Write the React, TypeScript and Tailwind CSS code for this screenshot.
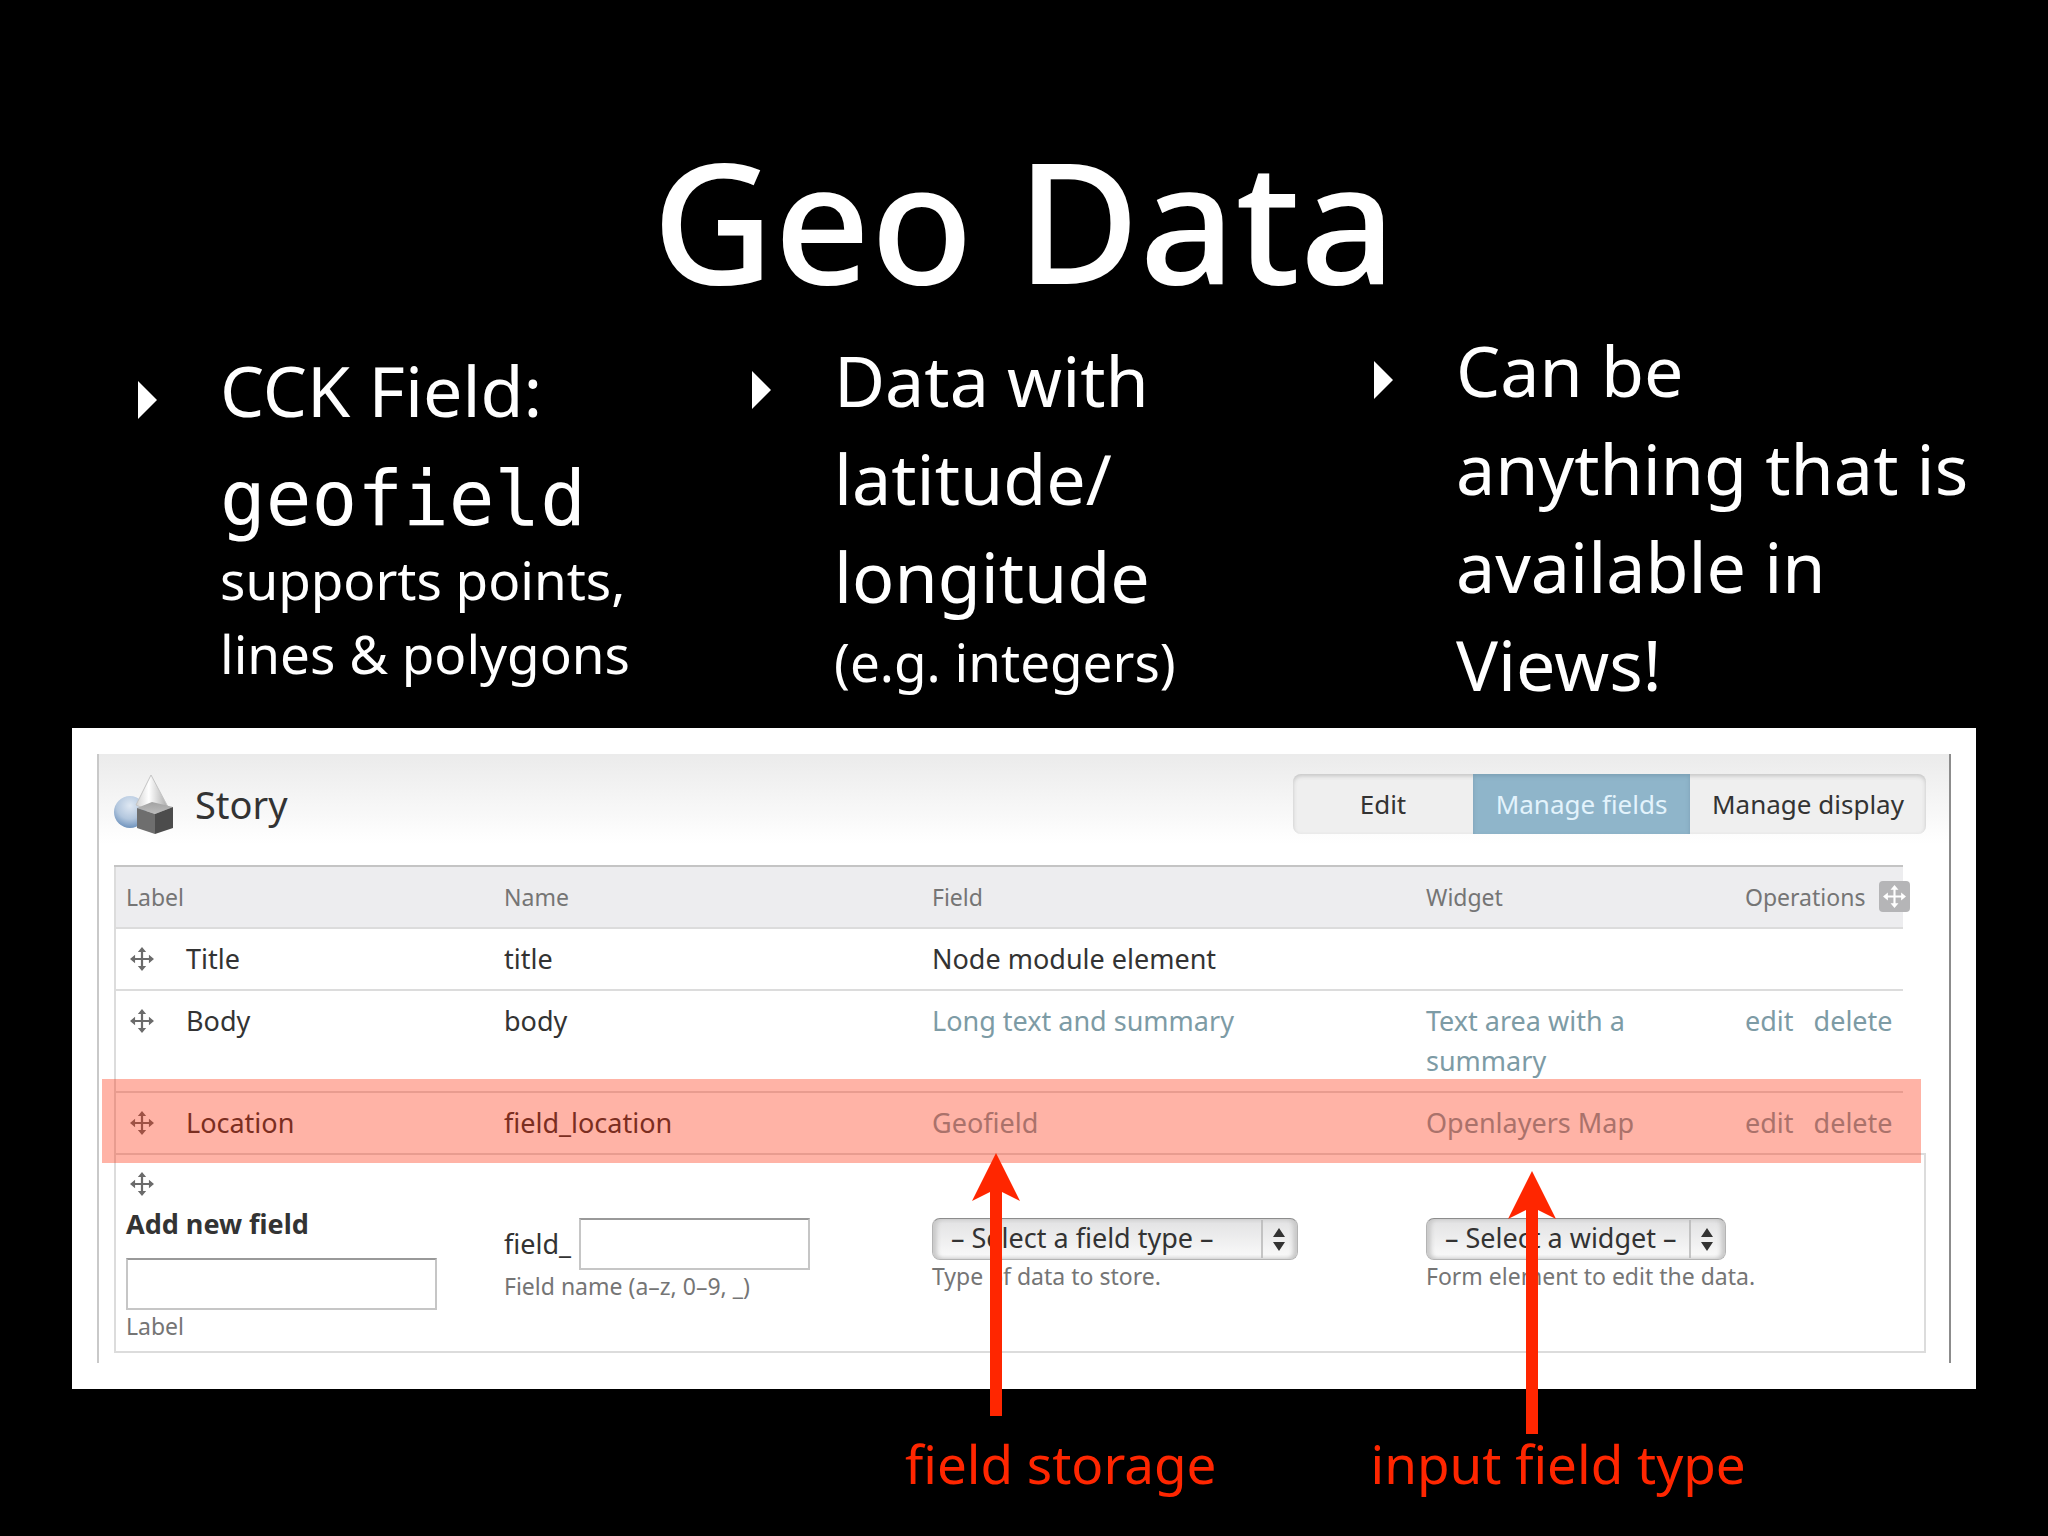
import type { ReactNode } from 'react';

const MoveIcon = ({ className }: { className: string }) => (
  <svg viewBox="0 0 26 26" className={className} aria-hidden="true">
    <path d="M13 4v18M4 13h18" stroke="currentColor" strokeWidth="2.4" fill="none" />
    <path
      d="M13 0l4.500 5.500h-9zM13 26l4.500-5.500h-9zM0 13l5.500-4.500v9zM26 13l-5.500-4.500v9z"
      fill="currentColor"
    />
  </svg>
);

const ShapesIcon = () => (
  <svg viewBox="0 0 60 60" className="size-[60px]" aria-hidden="true">
    <defs>
      <radialGradient id="sphere" cx="0.5" cy="0.3" r="0.7">
        <stop offset="0" stopColor="#dfe8f3" />
        <stop offset="0.6" stopColor="#b3c7de" />
        <stop offset="1" stopColor="#6f93bd" />
      </radialGradient>
      <linearGradient id="cone">
        <stop offset="0" stopColor="#d2d2d2" />
        <stop offset="0.4" stopColor="#ffffff" />
        <stop offset="1" stopColor="#a9a9a9" />
      </linearGradient>
      <linearGradient id="cubeTop" x1="0" y1="0" x2="0" y2="1">
        <stop offset="0" stopColor="#a2a2a2" />
        <stop offset="1" stopColor="#bdbdbd" />
      </linearGradient>
    </defs>
    <circle cx="16" cy="38" r="16" fill="url(#sphere)" />
    <path d="M37 1L22 31q14 8 32 2z" fill="url(#cone)" stroke="#c4c4c4" strokeWidth="1" />
    <path d="M23 34l15-6 21 5-18 7z" fill="url(#cubeTop)" />
    <path d="M23 34l18 6v20l-18-6z" fill="#6e6e6e" />
    <path d="M41 40l18-7v21l-18 6z" fill="#4c4c4c" />
  </svg>
);

const Arrow = ({ className }: { className: string }) => (
  <svg viewBox="0 0 48 263" className={className} aria-hidden="true">
    <path d="M24 0l24 48-18-9v224H18V39L0 48z" fill="#ff2600" />
  </svg>
);

function Bullet({ className, children }: { className: string; children: ReactNode }) {
  return (
    <li className={`flex gap-[63px] ${className}`}>
      <svg viewBox="0 0 19 38" className="mt-[40px] h-[38px] w-[19px] shrink-0" aria-hidden="true">
        <path d="M0 0l19 19L0 38z" fill="#fff" />
      </svg>
      <p className="text-[70px] leading-[98px] whitespace-nowrap">{children}</p>
    </li>
  );
}

function Select({ id, label, className }: { id: string; label: string; className: string }) {
  return (
    <div className={`relative ${className}`}>
      <select
        id={id}
        className="block h-[42px] w-full appearance-none rounded-lg border border-[#b4b4b4] border-t-[#8c8c8c] bg-linear-to-b from-[#e2e2e3] to-[#fafafa] pb-[2px] pl-[18px] text-[27px] leading-[38px] text-[#333] shadow-[inset_4px_0_4px_#c9c9c9,inset_-4px_0_4px_#c9c9c9]"
      >
        <option>{label}</option>
      </select>
      <svg
        viewBox="0 0 37 42"
        className="pointer-events-none absolute top-0 right-0 h-[42px] w-[37px]"
        aria-hidden="true"
      >
        <path d="M1 2v38" stroke="#b5b5b5" strokeWidth="1.5" />
        <path d="M18 10l6 9H12zM18 33l6-9H12z" fill="#333" />
      </svg>
    </div>
  );
}

const rows = [
  { label: 'Title', name: 'title', field: 'Node module element', widget: '', locked: true },
  { label: 'Body', name: 'body', field: 'Long text and summary', widget: 'Text area with a summary' },
  { label: 'Location', name: 'field_location', field: 'Geofield', widget: 'Openlayers Map' },
];

function FieldTable() {
  return (
    <table className="w-full table-fixed border-collapse border-l-2 border-[#dcdcdc] text-left text-[27px] leading-[40px] text-[#333]">
      <colgroup>
        <col className="w-[377px]" />
        <col className="w-[428px]" />
        <col className="w-[494px]" />
        <col />
        <col className="w-[170px]" />
        <col className="w-[22px]" />
      </colgroup>
      <thead>
        <tr className="h-[62px] text-[23px] text-[#757575]">
          {['Label', 'Name', 'Field', 'Widget'].map((title) => (
            <th key={title} className="border-y-2 border-[#dcdcdc] border-t-[#c4c4c4] bg-[#ededef] px-3 font-normal first:pl-[10px]">
              {title}
            </th>
          ))}
          <th className="relative border-y-2 border-[#dcdcdc] border-t-[#c4c4c4] bg-[#ededef] px-3 font-normal">
            Operations
            <button
              aria-label="Reorder"
              className="absolute top-[14px] -right-[7px] flex size-[31px] items-center justify-center rounded bg-[#b5b5b7] text-white"
            >
              <MoveIcon className="size-[23px]" />
            </button>
          </th>
          <td />
        </tr>
      </thead>
      <tbody>
        {rows.map((row) => (
          <tr key={row.label} className="align-top">
            <td className="border-b-2 border-[#dcdcdc] py-[10px] pl-[10px]">
              <span className="flex gap-[32px]">
                <MoveIcon className="mt-[8px] ml-1 size-[24px] text-[#6b6b6b]" />
                {row.label}
              </span>
            </td>
            <td className="border-b-2 border-[#dcdcdc] px-3 py-[10px]">{row.name}</td>
            <td className="border-b-2 border-[#dcdcdc] px-3 py-[10px]">
              {row.locked ? row.field : <a href="#field" className="text-[#7d9ba5]">{row.field}</a>}
            </td>
            <td className="border-b-2 border-[#dcdcdc] px-3 py-[10px] pr-[70px]">
              {row.widget && <a href="#widget" className="text-[#7d9ba5]">{row.widget}</a>}
            </td>
            <td className="border-b-2 border-[#dcdcdc] py-[10px] pl-3">
              {!row.locked && (
                <span className="flex gap-[20px] text-[#7d9ba5]">
                  <a href="#edit">edit</a>
                  <a href="#delete">delete</a>
                </span>
              )}
            </td>
            <td />
          </tr>
        ))}
        <tr className="h-[198px] border-b-2 border-[#dcdcdc] align-top">
          <td className="pt-[17px] pl-[10px]">
            <MoveIcon className="ml-1 size-[24px] text-[#6b6b6b]" />
            <p className="mt-[11px] leading-[34px] font-bold">Add new field</p>
            <input id="label" className="mt-[17px] block h-[52px] w-[311px] border-2 border-[#c6c6c6] border-t-[#999] bg-white px-2" />
            <label htmlFor="label" className="block text-[23px] leading-[32px] text-[#757575]">Label</label>
          </td>
          <td className="px-3 pt-[63px]">
            <div className="flex items-center gap-2">
              <label htmlFor="name">field_</label>
              <input id="name" aria-describedby="name-help" className="h-[52px] w-[231px] border-2 border-[#c6c6c6] border-t-[#999] bg-white px-2" />
            </div>
            <p id="name-help" className="text-[23px] leading-[32px] text-[#757575]">Field name (a–z, 0–9, _)</p>
          </td>
          <td className="px-3 pt-[63px]">
            <Select id="type" label="– Select a field type –" className="w-[366px]" />
            <label htmlFor="type" className="block text-[23px] leading-[32px] text-[#757575]">Type of data to store.</label>
          </td>
          <td colSpan={3} className="border-t-2 border-r-2 border-[#dcdcdc] px-3 pt-[63px]">
            <Select id="widget" label="– Select a widget –" className="w-[300px]" />
            <label htmlFor="widget" className="block text-[23px] leading-[32px] text-[#757575]">
              Form element to edit the data.
            </label>
          </td>
        </tr>
      </tbody>
    </table>
  );
}

export default function App() {
  return (
    <main className="min-h-screen bg-black font-['Noto_Sans',sans-serif] text-white">
      <h1 className="pt-[135px] text-center text-[168px] leading-none font-medium">Geo Data</h1>

      <ul className="mt-[18px] grid grid-cols-[614fr_622fr_602fr] pr-[72px] pb-[15px] pl-[138px]">
        <Bullet className="pt-5">
          CCK Field:
          <code className="mt-4 block font-['DejaVu_Sans_Mono',monospace] text-[76px] leading-[88px]">geofield</code>
          <small className="block text-[53px] leading-[74px]">
            supports points,
            <br />
            lines &amp; polygons
          </small>
        </Bullet>
        <Bullet className="pt-[10px]">
          Data with
          <br />
          latitude/
          <br />
          longitude
          <small className="block text-[53px] leading-[74px]">(e.g. integers)</small>
        </Bullet>
        <Bullet className="">
          Can be
          <br />
          anything that is
          <br />
          available in
          <br />
          Views!
        </Bullet>
      </ul>

      <section className="relative mx-[72px] bg-white px-[25px] pt-[26px] pb-[26px]">
        <div className="border-x-2 border-[#c9c9c9] border-r-[#8c8c8c] bg-linear-to-b from-[#ebebeb] to-white to-[90px] pr-[23px] pb-[10px] pl-[15px]">
          <header className="flex items-center gap-[21px] pt-5 pb-[31px] text-[#333]">
            <ShapesIcon />
            <h2 className="text-[38px] leading-[60px]">Story</h2>
            <nav className="ml-auto flex h-[60px] overflow-hidden rounded-lg bg-[#efefef] text-[26px] shadow-[inset_0_2px_4px_#c4c4c4]">
              <button className="w-[180px]">Edit</button>
              <button className="w-[217px] bg-[#8fb5ca] text-[#e3f3fc] shadow-[inset_0_2px_4px_#7b9fb3]">Manage fields</button>
              <button className="w-[236px]">Manage display</button>
            </nav>
          </header>
          <FieldTable />
        </div>

        {/* Highlight and arrows lie over the table */}
        <div className="pointer-events-none absolute top-[351px] right-[55px] left-[30px] h-[84px] bg-[#ff2600]/35" />
        <Arrow className="pointer-events-none absolute top-[425px] left-[900px] h-[263px] w-[48px]" />
        <Arrow className="pointer-events-none absolute top-[443px] left-[1436px] h-[263px] w-[48px]" />
      </section>

      <div className="flex gap-[154px] pt-[38px] pl-[905px] text-[53px] leading-[74px] whitespace-nowrap text-[#ff2600]">
        <p>field storage</p>
        <p>input field type</p>
      </div>
    </main>
  );
}
